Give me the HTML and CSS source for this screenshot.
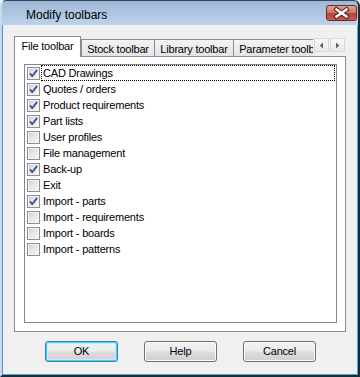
FILE: index.html
```html
<!DOCTYPE html>
<html>
<head>
<meta charset="utf-8">
<title>Modify toolbars</title>
<link rel="stylesheet" href="styles.css">
</head>
<body>
<div class="window">
  <div class="titlebar">
    <span class="title">Modify toolbars</span>
    <div class="close">
      <svg width="31" height="16" viewBox="0 0 31 16">
        <path d="M10.5 4.5 L20.5 11.5 M20.5 4.5 L10.5 11.5" stroke="#5a2a2a" stroke-width="4.6" stroke-linecap="square" fill="none"/>
        <path d="M10.5 4.5 L20.5 11.5 M20.5 4.5 L10.5 11.5" stroke="#ffffff" stroke-width="2.4" stroke-linecap="square" fill="none"/>
      </svg>
    </div>
  </div>
  <div class="client">
    <div class="tabs">
      <div class="tab-strip">
        <div class="tab active tab-file">File toolbar</div>
        <div class="tab tab-stock">Stock toolbar</div>
        <div class="tab tab-library">Library toolbar</div>
        <div class="tab tab-param">Parameter toolbar</div>
      </div>
      <div class="spin">
        <div class="spin-btn">
          <svg width="5" height="7" viewBox="0 0 5 7"><path d="M4 0.5 L0.8 3.5 L4 6.5 Z" fill="#4c5e80"/></svg>
        </div>
        <div class="spin-btn">
          <svg width="5" height="7" viewBox="0 0 5 7"><path d="M1 0.5 L4.2 3.5 L1 6.5 Z" fill="#4c5e80"/></svg>
        </div>
      </div>
    </div>
    <div class="panel">
      <div class="listbox">
        <div class="row"><span class="cb checked"><svg width="11" height="11" viewBox="0 0 11 11"><path d="M1.8 5.3 L4.2 8 L9.2 1.8" stroke="#3a5a9c" stroke-width="1.9" fill="none"/></svg></span><span class="label focused">CAD Drawings</span></div>
        <div class="row"><span class="cb checked"><svg width="11" height="11" viewBox="0 0 11 11"><path d="M1.8 5.3 L4.2 8 L9.2 1.8" stroke="#3a5a9c" stroke-width="1.9" fill="none"/></svg></span><span class="label">Quotes / orders</span></div>
        <div class="row"><span class="cb checked"><svg width="11" height="11" viewBox="0 0 11 11"><path d="M1.8 5.3 L4.2 8 L9.2 1.8" stroke="#3a5a9c" stroke-width="1.9" fill="none"/></svg></span><span class="label">Product requirements</span></div>
        <div class="row"><span class="cb checked"><svg width="11" height="11" viewBox="0 0 11 11"><path d="M1.8 5.3 L4.2 8 L9.2 1.8" stroke="#3a5a9c" stroke-width="1.9" fill="none"/></svg></span><span class="label">Part lists</span></div>
        <div class="row"><span class="cb"></span><span class="label">User profiles</span></div>
        <div class="row"><span class="cb"></span><span class="label">File management</span></div>
        <div class="row"><span class="cb checked"><svg width="11" height="11" viewBox="0 0 11 11"><path d="M1.8 5.3 L4.2 8 L9.2 1.8" stroke="#3a5a9c" stroke-width="1.9" fill="none"/></svg></span><span class="label">Back-up</span></div>
        <div class="row"><span class="cb"></span><span class="label">Exit</span></div>
        <div class="row"><span class="cb checked"><svg width="11" height="11" viewBox="0 0 11 11"><path d="M1.8 5.3 L4.2 8 L9.2 1.8" stroke="#3a5a9c" stroke-width="1.9" fill="none"/></svg></span><span class="label">Import - parts</span></div>
        <div class="row"><span class="cb"></span><span class="label">Import - requirements</span></div>
        <div class="row"><span class="cb"></span><span class="label">Import - boards</span></div>
        <div class="row"><span class="cb"></span><span class="label">Import - patterns</span></div>
      </div>
    </div>
    <div class="buttons">
      <div class="btn default">OK</div>
      <div class="btn">Help</div>
      <div class="btn">Cancel</div>
    </div>
  </div>
</div>
</body>
</html>
```

FILE: styles.css
```css
html, body {
  margin: 0;
  padding: 0;
  background: #f0f0f0;
}

.window {
  width: 360px;
  height: 377px;
  box-sizing: border-box;
  display: flex;
  flex-direction: column;
  border-top: 1px solid #33475f;
  border-left: 2px solid #c7d9ee;
  border-right: 2px solid #1e2a38;
  border-bottom: 2px solid #1e2a38;
  border-radius: 6px 6px 0 0;
  background: linear-gradient(#9fb8d6, #bdd3ec 24px, #f0f0f0 24px);
  font-family: "Liberation Sans", Arial, sans-serif;
  font-size: 11px;
  letter-spacing: -0.2px;
  color: #000;
}

.titlebar {
  height: 24px;
  flex: none;
  display: flex;
  justify-content: space-between;
  align-items: flex-start;
  padding: 0 1px 0 24px;
}

.title {
  font-size: 12px;
  letter-spacing: 0;
  line-height: 12px;
  margin-top: 8px;
  color: #000;
}

.close {
  width: 31px;
  height: 16px;
  margin-top: 4px;
  box-sizing: border-box;
  border: 1px solid #6a2b2b;
  border-radius: 3px;
  background: linear-gradient(#e2a093 0%, #d27866 45%, #bf3e32 55%, #cc5a4c 100%);
  display: flex;
  align-items: center;
  justify-content: center;
  overflow: hidden;
}

.close svg {
  display: block;
  flex: none;
}

.client {
  flex: 1;
  display: flex;
  flex-direction: column;
  padding: 11px 10px 0 11px;
  border-left: 1px solid #5f8fc6;
  border-right: 1px solid #36b1ea;
  border-bottom: 1px solid #36b1ea;
  background: #f0f0f0;
}

.tabs {
  display: flex;
  height: 21px;
  flex: none;
  position: relative;
  z-index: 1;
}

.tab-strip {
  width: 299px;
  flex: none;
  display: flex;
  align-items: flex-end;
  overflow: hidden;
}

.tab {
  flex: none;
  box-sizing: border-box;
  height: 18px;
  line-height: 16px;
  padding-top: 1px;
  text-align: center;
  white-space: nowrap;
  border: 1px solid #898c95;
  border-right: none;
  background: linear-gradient(#f3f3f3, #e4e4e4);
}

.tab.active {
  height: 21px;
  line-height: 17px;
  padding-top: 1px;
  border-right: 1px solid #898c95;
  border-bottom: none;
  background: #ffffff;
}

.tab-file { width: 67px; }
.tab-stock { width: 73px; }
.tab-library { width: 79px; }
.tab-param { width: 96px; }

.spin {
  display: flex;
  gap: 1px;
  margin-top: 2px;
  margin-left: 1px;
  align-self: flex-start;
}

.spin-btn {
  width: 15px;
  height: 14px;
  box-sizing: border-box;
  border: 1px solid #d9d9d9;
  background: linear-gradient(#f7f7f7, #e9e9e9);
  display: flex;
  align-items: center;
  justify-content: center;
}

.spin-btn svg {
  display: block;
}

.panel {
  width: 332px;
  height: 276px;
  margin-top: -1px;
  box-sizing: border-box;
  border: 1px solid #898c95;
  background: #ffffff;
  padding: 7px 8px 8px 9px;
  display: flex;
}

.listbox {
  flex: 1;
  box-sizing: border-box;
  border: 1px solid #828790;
  background: #ffffff;
  padding-top: 0;
  padding-right: 1px;
}

.row {
  height: 16px;
  display: flex;
  align-items: flex-start;
}

.cb {
  width: 13px;
  height: 13px;
  box-sizing: border-box;
  margin: 2px 1px 0 2px;
  flex: none;
  border: 1px solid #8f8f8f;
  background: linear-gradient(135deg, #d2d2d2 0%, #e9e9e9 55%, #f9f9f9 100%);
  box-shadow: inset 0 0 0 1px #f3f3f3;
  display: flex;
  align-items: center;
  justify-content: center;
}

.cb svg {
  display: block;
}

.label {
  flex: 1;
  box-sizing: border-box;
  height: 16px;
  line-height: 14px;
  padding-left: 1px;
  border: 1px solid transparent;
  white-space: nowrap;
}

.label.focused {
  border: 1px dotted #000;
}

.buttons {
  display: flex;
  justify-content: center;
  gap: 26px;
  margin-top: 9px;
}

.btn {
  width: 73px;
  height: 21px;
  box-sizing: border-box;
  border: 1px solid #707070;
  border-radius: 3px;
  background: linear-gradient(#f2f2f2 0%, #ebebeb 48%, #dddddd 52%, #cfcfcf 100%);
  box-shadow: inset 0 0 0 1px #fbfbfb;
  text-align: center;
  line-height: 19px;
}

.btn.default {
  border-color: #3c7fb1;
  box-shadow: inset 0 0 0 1px #48d0f8, inset 0 0 0 2px #c4ecfb;
  background: linear-gradient(#eaf6fd 0%, #d9f0fc 48%, #bee6fd 52%, #a7d9f5 100%);
  background: linear-gradient(#f2f2f2 0%, #ebebeb 48%, #dddddd 52%, #cfcfcf 100%);
}
```
